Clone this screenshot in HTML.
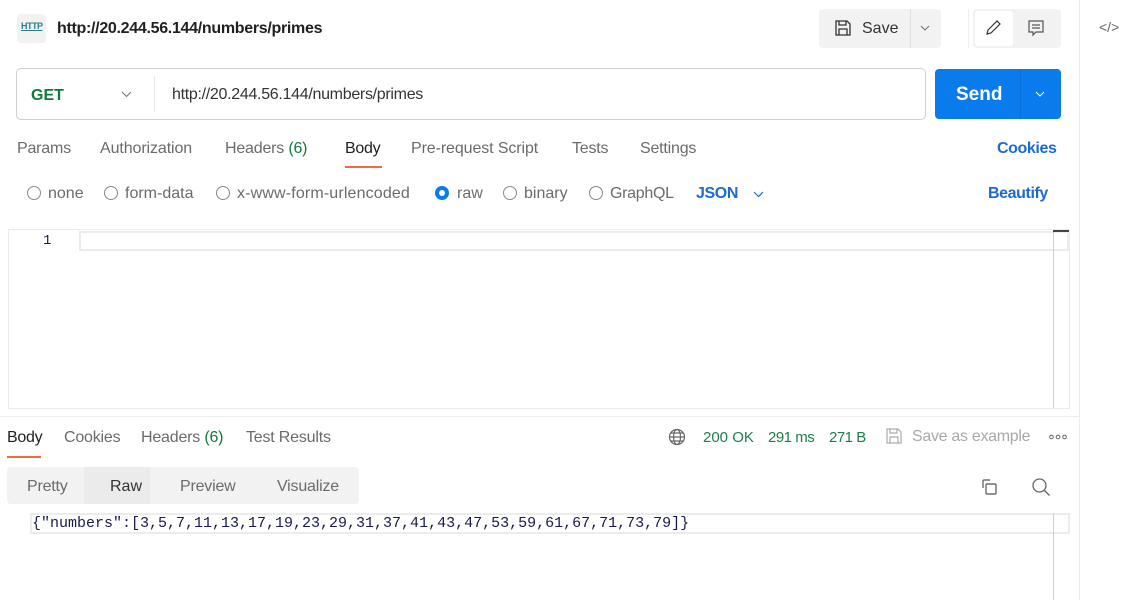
<!DOCTYPE html>
<html><head><style>
*{margin:0;padding:0;box-sizing:border-box}
body{width:1123px;height:600px;background:#fff;font-family:"Liberation Sans",sans-serif;position:relative;overflow:hidden;color:#212121}
.a{position:absolute;white-space:nowrap}
.g{color:#6b6b6b;font-size:16px}
.r{width:14px;height:14px;border:1px solid #8a8a8a;border-radius:50%;display:inline-block}
</style></head><body>
<div class="a" style="left:1079px;top:0;width:1px;height:600px;background:#ececec"></div>
<div class="a" style="left:17px;top:14px;width:29px;height:29px;background:#f2f2f2;border-radius:4px"></div>
<div class="a" style="left:21px;top:21px;font-size:9px;color:#2a7f8f;font-weight:bold;text-decoration:underline;letter-spacing:-.5px">HTTP</div>
<div class="a" style="left:57px;top:20px;font-size:16px;font-weight:bold;color:#212121;letter-spacing:-.3px">http://20.244.56.144/numbers/primes</div>
<div class="a" style="left:819px;top:9px;width:122px;height:39px;background:#f2f2f2;border-radius:4px"></div>
<div class="a" style="left:910px;top:9px;width:1px;height:39px;background:#e0e0e0"></div>
<svg class="a" style="left:834px;top:19px" width="18" height="18" viewBox="0 0 18 18" fill="none" stroke="#333" stroke-width="1.3"><path d="M2 2h11l3 3v11H2z M5 2v4h7V2 M5 16v-6h8v6"/></svg>
<div class="a" style="left:862px;top:20px;font-size:16px;color:#333">Save</div>
<svg class="a" style="left:920px;top:24px" width="10" height="8" viewBox="0 0 10 8" fill="none" stroke="#777" stroke-width="1.1"><path d="M1 2l4 4 4-4"/></svg>
<div class="a" style="left:968px;top:9px;width:1px;height:39px;background:#eee"></div>
<div class="a" style="left:973px;top:9px;width:88px;height:39px;background:#f2f2f2;border-radius:4px"></div>
<div class="a" style="left:975px;top:11px;width:38px;height:35px;background:#fff;border-radius:3px"></div>
<svg class="a" style="left:984px;top:19px" width="18" height="18" viewBox="0 0 18 18" fill="none" stroke="#333" stroke-width="1.2"><path d="M3 15l1-4 9-9 3 3-9 9z"/></svg>
<svg class="a" style="left:1027px;top:19px" width="18" height="18" viewBox="0 0 18 18" fill="none" stroke="#555" stroke-width="1.2"><path d="M2 2h14v11H9l-3 3v-3H2z M5 6h8 M5 9h8"/></svg>
<div class="a" style="left:1099px;top:19px;font-size:14px;color:#666">&lt;/&gt;</div>
<div class="a" style="left:16px;top:68px;width:910px;height:52px;border:1px solid #cfcfcf;border-radius:5px"></div>
<div class="a" style="left:154px;top:76px;width:1px;height:36px;background:#e6e6e6"></div>
<div class="a" style="left:31px;top:87px;font-size:16px;font-weight:bold;color:#0f7a3a">GET</div>
<svg class="a" style="left:121px;top:90px" width="11" height="8" viewBox="0 0 11 8" fill="none" stroke="#777" stroke-width="1.1"><path d="M1 2l4.5 4.5L10 2"/></svg>
<div class="a" style="left:172px;top:86px;font-size:16px;color:#333;letter-spacing:-.3px">http://20.244.56.144/numbers/primes</div>
<div class="a" style="left:935px;top:69px;width:126px;height:50px;background:#097bed;border-radius:4px"></div>
<div class="a" style="left:1020px;top:69px;width:1px;height:50px;background:#0a6fd6"></div>
<div class="a" style="left:956px;top:84px;font-size:19px;font-weight:bold;color:#fff">Send</div>
<svg class="a" style="left:1035px;top:90px" width="10" height="8" viewBox="0 0 10 8" fill="none" stroke="#fff" stroke-width="1.1"><path d="M1 2l4 4 4-4"/></svg>
<div class="a g" style="left:17px;top:140px;letter-spacing:-.2px">Params</div>
<div class="a g" style="left:100px;top:140px;letter-spacing:-.1px">Authorization</div>
<div class="a g" style="left:225px;top:140px;letter-spacing:-.2px">Headers <span style="color:#0f7a3a">(6)</span></div>
<div class="a" style="left:345px;top:140px;font-size:16px;color:#212121;letter-spacing:-.3px">Body</div>
<div class="a" style="left:345px;top:166px;width:37px;height:2px;background:#f26b3a"></div>
<div class="a g" style="left:411px;top:140px;letter-spacing:-.1px">Pre-request Script</div>
<div class="a g" style="left:572px;top:140px;letter-spacing:-.2px">Tests</div>
<div class="a g" style="left:640px;top:140px;letter-spacing:-.2px">Settings</div>
<div class="a" style="left:997px;top:140px;font-size:16px;font-weight:bold;color:#1d6ad3;letter-spacing:-.4px">Cookies</div>
<div class="a" style="left:27px;top:186px"><span class="r"></span></div>
<div class="a g" style="left:48px;top:185px">none</div>
<div class="a" style="left:104px;top:186px"><span class="r"></span></div>
<div class="a g" style="left:125px;top:185px">form-data</div>
<div class="a" style="left:216px;top:186px"><span class="r"></span></div>
<div class="a g" style="left:237px;top:185px;letter-spacing:.15px">x-www-form-urlencoded</div>
<div class="a" style="left:435px;top:186px"><span class="r" style="border:4px solid #097bed"></span></div>
<div class="a g" style="left:457px;top:185px">raw</div>
<div class="a" style="left:503px;top:186px"><span class="r"></span></div>
<div class="a g" style="left:524px;top:185px">binary</div>
<div class="a" style="left:589px;top:186px"><span class="r"></span></div>
<div class="a g" style="left:610px;top:185px;letter-spacing:-.3px">GraphQL</div>
<div class="a" style="left:696px;top:185px;font-size:16px;font-weight:bold;color:#1d6ad3;letter-spacing:-.4px">JSON</div>
<svg class="a" style="left:753px;top:190px" width="11" height="8" viewBox="0 0 11 8" fill="none" stroke="#1d6ad3" stroke-width="1.2"><path d="M1 2l4.5 4.5L10 2"/></svg>
<div class="a" style="left:988px;top:185px;font-size:16px;font-weight:bold;color:#1d6ad3;letter-spacing:-.4px">Beautify</div>
<div class="a" style="left:8px;top:229px;width:1062px;height:180px;border:1px solid #ebebeb"></div>
<div class="a" style="left:79px;top:231px;width:990px;height:20px;border:2px solid #ececec"></div>
<div class="a" style="left:1053px;top:230px;width:1px;height:178px;background:#d0d0d0"></div>
<div class="a" style="left:1053px;top:230px;width:16px;height:2px;background:#444"></div>
<div class="a" style="left:43px;top:233px;font-family:'Liberation Mono',monospace;font-size:14px;color:#1a1a4a">1</div>
<div class="a" style="left:0;top:416px;width:1079px;height:1px;background:#ececec"></div>
<div class="a" style="left:7px;top:429px;font-size:16px;color:#212121;letter-spacing:-.3px">Body</div>
<div class="a" style="left:7px;top:456px;width:34px;height:2px;background:#f26b3a"></div>
<div class="a g" style="left:64px;top:429px;letter-spacing:-.2px">Cookies</div>
<div class="a g" style="left:141px;top:429px;letter-spacing:-.2px">Headers <span style="color:#0f7a3a">(6)</span></div>
<div class="a g" style="left:246px;top:429px;letter-spacing:-.2px">Test Results</div>
<svg class="a" style="left:668px;top:428px" width="18" height="18" viewBox="0 0 18 18" fill="none" stroke="#666" stroke-width="1.2"><circle cx="9" cy="9" r="7.5"/><ellipse cx="9" cy="9" rx="3.5" ry="7.5"/><path d="M1.5 9h15 M3 5h12 M3 13h12"/></svg>
<div class="a" style="left:703px;top:429px;font-size:15px;color:#1a7f4b">200 OK</div>
<div class="a" style="left:768px;top:429px;font-size:15px;color:#1a7f4b;letter-spacing:-.5px">291 ms</div>
<div class="a" style="left:829px;top:429px;font-size:15px;color:#1a7f4b;letter-spacing:-.5px">271 B</div>
<svg class="a" style="left:885px;top:427px" width="18" height="18" viewBox="0 0 18 18" fill="none" stroke="#aaa" stroke-width="1.2"><path d="M2 2h11l3 3v11H2z M5 2v4h7V2 M5 16v-6h8v6"/></svg>
<div class="a" style="left:912px;top:428px;font-size:16px;color:#a8a8a8;letter-spacing:-.3px">Save as example</div>
<svg class="a" style="left:1048px;top:434px" width="20" height="6" viewBox="0 0 20 6" fill="none" stroke="#666" stroke-width="1"><circle cx="3.5" cy="3" r="1.8"/><circle cx="10" cy="3" r="1.8"/><circle cx="16.5" cy="3" r="1.8"/></svg>
<div class="a" style="left:7px;top:467px;width:352px;height:37px;background:#f2f2f2;border-radius:4px"></div>
<div class="a" style="left:84px;top:467px;width:66px;height:37px;background:#ebebeb"></div>
<div class="a g" style="left:27px;top:478px;letter-spacing:-.2px">Pretty</div>
<div class="a" style="left:110px;top:478px;font-size:16px;color:#333">Raw</div>
<div class="a g" style="left:180px;top:478px;letter-spacing:-.2px">Preview</div>
<div class="a g" style="left:277px;top:478px;letter-spacing:-.2px">Visualize</div>
<svg class="a" style="left:981px;top:478px" width="18" height="18" viewBox="0 0 18 18" fill="none" stroke="#555" stroke-width="1.2"><path d="M2 10V3q0-1 1-1h6"/><rect x="5" y="6" width="10" height="10" rx="1"/></svg>
<svg class="a" style="left:1031px;top:477px" width="20" height="20" viewBox="0 0 20 20" fill="none" stroke="#666" stroke-width="1.3"><circle cx="8.5" cy="8.5" r="6.5"/><path d="M13.5 13.5l5 5"/></svg>
<div class="a" style="left:30px;top:513px;width:1040px;height:21px;border:2px solid #ececec"></div>
<div class="a" style="left:1053px;top:513px;width:1px;height:87px;background:#d0d0d0"></div>
<div class="a" style="left:32px;top:515px;font-family:'Liberation Mono',monospace;font-size:15px;color:#1a1a4a;letter-spacing:0px">{"numbers":[3,5,7,11,13,17,19,23,29,31,37,41,43,47,53,59,61,67,71,73,79]}</div>
</body></html>
